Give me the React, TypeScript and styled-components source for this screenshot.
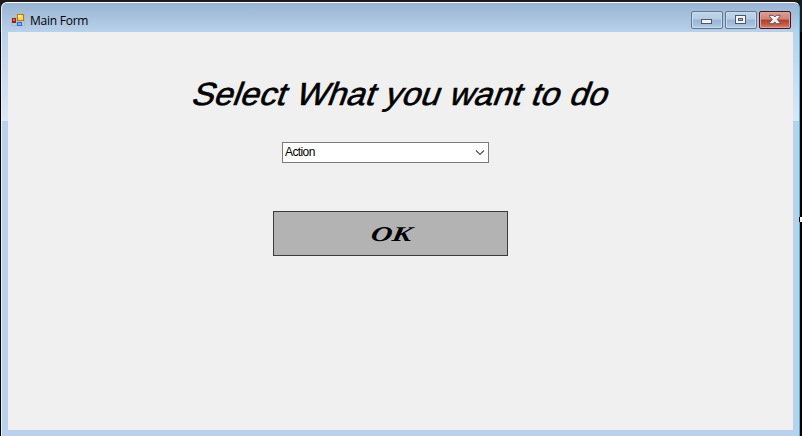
import React from "react";
import styled, { createGlobalStyle } from "styled-components";

const GlobalStyle = createGlobalStyle`
  html, body { margin: 0; background: #000; }
  body { width: 802px; height: 436px; overflow: hidden; }
  * { box-sizing: border-box; }
`;

const Desktop = styled.div`
  position: relative;
  width: 802px;
  height: 436px;
  padding: 2px 2px 0 1px;
  overflow: hidden;
  background: linear-gradient(#1c1a1a 0 32px, #000 32px);
  font-family: "Open Sans", "Liberation Sans", sans-serif;
`;

const Window = styled.div`
  display: flex;
  flex-direction: column;
  width: 799px;
  height: 434px;
  padding: 0 5px 6px 6px;
  border: 1px solid #fff;
  border-right-color: #3fb5dc;
  border-bottom: 0;
  border-radius: 6px 6px 0 0;
  border-left-color: #eaf3fb;
  background:
    linear-gradient(#98b4d2, #b9d1ea) 0 0 / 100% 29px no-repeat,
    linear-gradient(#b9d1ea 0, #dce7f5 88px, #dce7f5 89px, #b3cce6 89px, #b9d1ea 90px) 0 29px / 100% 372px no-repeat,
    #b9d1ea;
`;

const TitleBar = styled.header`
  display: flex;
  flex: 0 0 29px;
  align-items: flex-start;
  padding: 8px 3px 0 3px;
`;

const Caption = styled.span`
  flex: 1;
  margin: 2px 0 0 5px;
  font-size: 12px;
  line-height: 16px;
  letter-spacing: -0.25px;
  color: #000;
`;

const Controls = styled.div`
  display: flex;
  gap: 2px;
`;

const CaptionButton = styled.button<{ $close?: boolean }>`
  display: flex;
  align-items: center;
  justify-content: center;
  width: 32px;
  height: 18px;
  padding: 0;
  border: 1px solid ${(p) => (p.$close ? "#47152a" : "#63758f")};
  border-radius: 2px;
  box-shadow: inset 0 0 0 1px ${(p) => (p.$close ? "#e0a294" : "#c8dcef")};
  background: ${(p) =>
    p.$close
      ? "linear-gradient(#dba092 0, #cf8373 45%, #b53c25 50%, #c4604a 80%, #d08b70 100%)"
      : "linear-gradient(#c0d5e9 0, #b5cce4 45%, #98b4d2 50%, #a6c1dd 80%, #b9d1ea 100%)"};
`;

const Client = styled.main`
  display: flex;
  flex: 1;
  flex-direction: column;
  align-items: flex-start;
  width: 785px;
  padding-top: 40px;
  background: #f0f0f0;
`;

const Heading = styled.h1`
  margin: 0 0 0 182px;
  height: 44px;
  font: 400 32px/44px "Liberation Sans", Arial, sans-serif;
  word-spacing: 0.8px;
  white-space: nowrap;
  color: #000;
  -webkit-text-stroke: 0.6px #000;
  transform-origin: 0 33px;
  transform: skewX(-20deg) scaleX(1.056);
`;

const Combo = styled.div`
  display: flex;
  align-items: center;
  justify-content: space-between;
  width: 207px;
  height: 21px;
  margin: 26px 0 0 274px;
  padding: 0 3px 0 2px;
  border: 1px solid #7a7a7a;
  background: #fff;
  font: 12px/19px "Liberation Sans", Arial, sans-serif;
  letter-spacing: -0.6px;
  color: #000;
`;

const OkButton = styled.button`
  display: flex;
  align-items: center;
  justify-content: center;
  width: 235px;
  height: 45px;
  margin: 48px 0 0 265px;
  padding: 0;
  border: 1px solid #3c3c3c;
  background: #b3b3b3;
  color: #000;
`;

const OkLabel = styled.span`
  margin-left: 2px;
  font: italic 700 21px/24px "Liberation Serif", "Times New Roman", serif;
  transform: skewX(-10deg) scaleX(1.4);
`;

const EdgeHandle = styled.div`
  position: absolute;
  top: 217px;
  right: 0;
  width: 3px;
  height: 5px;
  border-left: 1px solid #000;
  background: #fff;
`;

const FormIconSvg = styled.svg`
  display: block;
  margin: 1px 0 0;
`;

const FormIcon = () => (
  <FormIconSvg width="14" height="15" viewBox="0 0 14 15" shapeRendering="crispEdges">
    <path d="M.5 1.5h5v12h-5zM5.5 1.5h8v12h-8z" fill="none" stroke="#b1bac2" />
    <rect x="1" y="6" width="4" height="5" fill="#96201a" />
    <rect x="2" y="7" width="2" height="2" fill="#ef6650" />
    <rect x="6" y="2" width="7" height="7" fill="#b77b08" />
    <rect x="7" y="3" width="5" height="5" fill="#ffd653" />
    <rect x="7" y="3" width="3" height="2" fill="#fff0a0" />
    <rect x="6" y="10" width="5" height="4" fill="#2f69c9" />
    <rect x="7" y="11" width="3" height="2" fill="#83b5ff" />
  </FormIconSvg>
);

const MinimizeIcon = () => (
  <svg width="12" height="12" viewBox="0 0 12 12">
    <rect x=".5" y="5.5" width="10" height="4" fill="#f4f4f4" stroke="#4e586a" shapeRendering="crispEdges" />
  </svg>
);

const MaximizeIcon = () => (
  <svg width="12" height="12" viewBox="0 0 12 12" shapeRendering="crispEdges">
    <rect x=".5" y="1.5" width="10" height="8" fill="#f4f4f4" stroke="#4e586a" />
    <rect x="3.5" y="4.5" width="4" height="2" fill="#a3bcd8" stroke="#4e586a" />
  </svg>
);

const CloseIcon = () => (
  <svg width="12" height="12" viewBox="0 0 12 12">
    <path
      d="M.5 1.3h3.6L5.8 3l1.7-1.7H11v1L8.3 5.5 11 8.7v1H7.5L5.8 8 4.1 9.7H.5v-1l2.8-3.2L.5 2.3z"
      fill="#f5f3f2"
      stroke="#4e4656"
      strokeWidth=".9"
    />
  </svg>
);

const Chevron = () => (
  <svg width="10" height="7" viewBox="0 0 10 7">
    <path d="M1 1.5l4 4 4-4" fill="none" stroke="#4d4d4d" strokeWidth="1.1" />
  </svg>
);

export default function App() {
  return (
    <Desktop>
      <GlobalStyle />
      <Window>
        <TitleBar>
          <FormIcon />
          <Caption>Main Form</Caption>
          <Controls>
            <CaptionButton aria-label="Minimize"><MinimizeIcon /></CaptionButton>
            <CaptionButton aria-label="Maximize"><MaximizeIcon /></CaptionButton>
            <CaptionButton $close aria-label="Close"><CloseIcon /></CaptionButton>
          </Controls>
        </TitleBar>
        <Client>
          <Heading>Select What you want to do</Heading>
          <Combo>
            <span>Action</span>
            <Chevron />
          </Combo>
          <OkButton>
            <OkLabel>OK</OkLabel>
          </OkButton>
        </Client>
      </Window>
      <EdgeHandle />
    </Desktop>
  );
}
